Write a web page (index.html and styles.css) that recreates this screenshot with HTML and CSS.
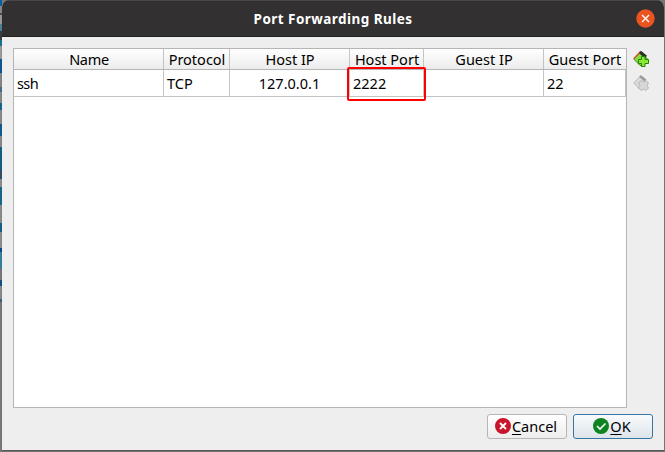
FILE: index.html
```
<!DOCTYPE html>
<html lang="en">
<head>
<meta charset="utf-8">
<title>Port Forwarding Rules</title>
<link rel="stylesheet" href="styles.css">
</head>
<body>
<main class="window">
  <header class="titlebar">
    <h1>Port Forwarding Rules</h1>
    <button class="close" aria-label="Close"><svg width="19" height="19" viewBox="0 0 19 19"><circle cx="9.5" cy="9.5" r="9.2" fill="#e95420"/><path d="M6 6l7 7M13 6l-7 7" stroke="#fff" stroke-width="1.4"/></svg></button>
  </header>
  <section class="content">
    <div class="table">
      <div class="row head">
        <div><span class="name">Name</span></div><div><span>Protocol</span></div><div><span>Host IP</span></div><div><span>Host Port</span></div><div><span>Guest IP</span></div><div><span>Guest Port</span></div>
      </div>
      <div class="row data">
        <div><span class="rule">ssh</span></div><div>TCP</div><div class="center">127.0.0.1</div><div class="marked">2222</div><div></div><div>22</div>
      </div>
    </div>
    <aside class="tools">
      <svg width="17" height="17" viewBox="0 0 17 17"><path d="M.8 9L7.5 2l7 7-5 6.5H7z" fill="#83df38" stroke="#43861f"/><path d="M.8 8.8L7.5 1.5" stroke="#d65739" stroke-width="1.5"/><path d="M7 2L13 7" stroke="#292e28" stroke-width="3"/><path d="M8.5 6.5h3.5v3h3.5v4H12v3H8.500v-3H5.500v-4h3z" fill="#8aea32" stroke="#23820c"/></svg>
      <svg width="17" height="17" viewBox="0 0 17 17"><path d="M.8 9L7.5 2l7 7-5 6.500H7z" fill="#dcdcdc" stroke="#b5b5b5"/><path d="M7 2L12.500 6.500" stroke="#999" stroke-width="2.6"/><path d="M8 6.500l2.500 1.500L13 6.500l2.500 2.500-1.500 2.500 1.500 2.500-2.500 2.500-2.500-1.500L8 16.500 5.500 14 7 11.500 5.500 9z" fill="#d8d8d8" stroke="#b5b5b5"/></svg>
    </aside>
  </section>
  <footer class="actions">
    <button class="button"><svg width="16" height="16" viewBox="0 0 16 16"><circle cx="8" cy="8" r="8" fill="#c7162b"/><path d="M5 5l6 6M11 5l-6 6" stroke="#fff" stroke-width="1.8"/></svg><span><u>C</u>ancel</span></button>
    <button class="button primary"><svg width="16" height="16" viewBox="0 0 16 16"><circle cx="8" cy="8" r="8" fill="#0e8420"/><path d="M4 8l3 3 5.5-5.5" fill="none" stroke="#fff" stroke-width="1.6"/></svg><span><u>O</u>K</span></button>
  </footer>
</main>
</body>
</html>
```
FILE: styles.css
```
* { box-sizing: border-box; }
body {
  width: 665px;
  height: 452px;
  margin: 0;
  padding: 0 2px 2px;
  overflow: hidden;
  color: #000;
  font: 14.5px/20px "Noto Sans", sans-serif;
  background:
    linear-gradient(#0862a0 0 6px, #888 6px 13px, #464b50 13px 15px, #999 15px 24px, #4c8195 24px 31px, #373b43 31px 40px, #167092 40px 46px, #999 46px 59px, #0a5493 59px 73px, #858585 73px 87px, #406d8a 87px 92px, #888 92px 103px, #13658b 103px 110px, #888 110px 124px, #0c5a93 124px 136px, #888 136px 147px, #155b84 147px 170px, #334d63 170px 179px, #8b8b8b 179px 187px, #16658d 187px 205px, #8a8a8a 205px 223px, #165d87 223px 232px, #8b8b8b 232px 248px, #0b4787 248px 252px, #387f9b 252px 269px, #777 269px 280px, #164d82 280px 286px, #888 286px 299px, #3f6071 299px 302px, #777 302px) left / 2px 100% no-repeat,
    #777;
}
h1 { margin: 0; }
button { font: inherit; color: inherit; padding: 0; }
svg { display: block; flex: none; }
.window {
  width: 662px;
  height: 450px;
  background: #eee;
  border-radius: 7px 7px 0 0;
  overflow: hidden;
  box-shadow: 0 1px 1px #555;
}
.titlebar {
  height: 37px;
  display: grid;
  grid-template-columns: 1fr 28px;
  align-items: center;
  background: #323030;
  border-top: 1px solid #494747;
  border-bottom: 1px solid #222;
}
h1 {
  padding-left: 28px;
  color: #fff;
  text-align: center;
  font-size: 13.5px;
  line-height: 20px;
  letter-spacing: .45px;
}
.close { border: 0; background: none; width: 19px; height: 19px; margin-top: -1px; }
.content { display: flex; padding: 11px 0 0 11px; }
.table {
  width: 614px;
  height: 360px;
  background: #fff;
  border: 1px solid #b5b5b5;
}
.row { display: grid; grid-template-columns: 150px 66px 120px 74px 120px 82px; }
.row > div { border-right: 1px solid #c4c4c4; white-space: nowrap; }
.head { height: 21px; text-align: center; background: linear-gradient(#fff, #ececec); border-bottom: 1px solid #b5b5b5; }
.head > div { display: flex; justify-content: center; padding-left: 1px; }
.head > div:last-child { border-right: 0; padding-left: 0; }
.name { letter-spacing: -.3px; }
.rule { letter-spacing: -.6px; }
.data { height: 27px; border-bottom: 1px solid #c4c4c4; line-height: 27px; }
.data > div { padding-left: 3px; }
.data .center { padding: 0; text-align: center; }
.data .marked { position: relative; }
.marked::after {
  content: "";
  position: absolute;
  inset: -3px -3px -4px -3px;
  border: 2px solid #ff0000;
  border-radius: 2px;
}
.tools { width: 17px; margin: 2px 0 0 6px; display: flex; flex-direction: column; gap: 7px; }
.actions { display: flex; justify-content: flex-end; gap: 6px; padding: 6px 11px 0 0; }
.button {
  width: 80px;
  height: 25px;
  display: flex;
  justify-content: center;
  align-items: center;
  gap: 1px;
  padding-right: 2px;
  border: 1px solid #b6b6b6;
  border-radius: 3px;
  background: linear-gradient(#fff, #ededed);
  line-height: 23px;
}
.button.primary { border-color: #3675a2; background: linear-gradient(#f9fbfd, #dce4ea); }
.button svg { margin-top: -2px; }
u { text-decoration-thickness: 1px; text-underline-offset: 2px; }
```
